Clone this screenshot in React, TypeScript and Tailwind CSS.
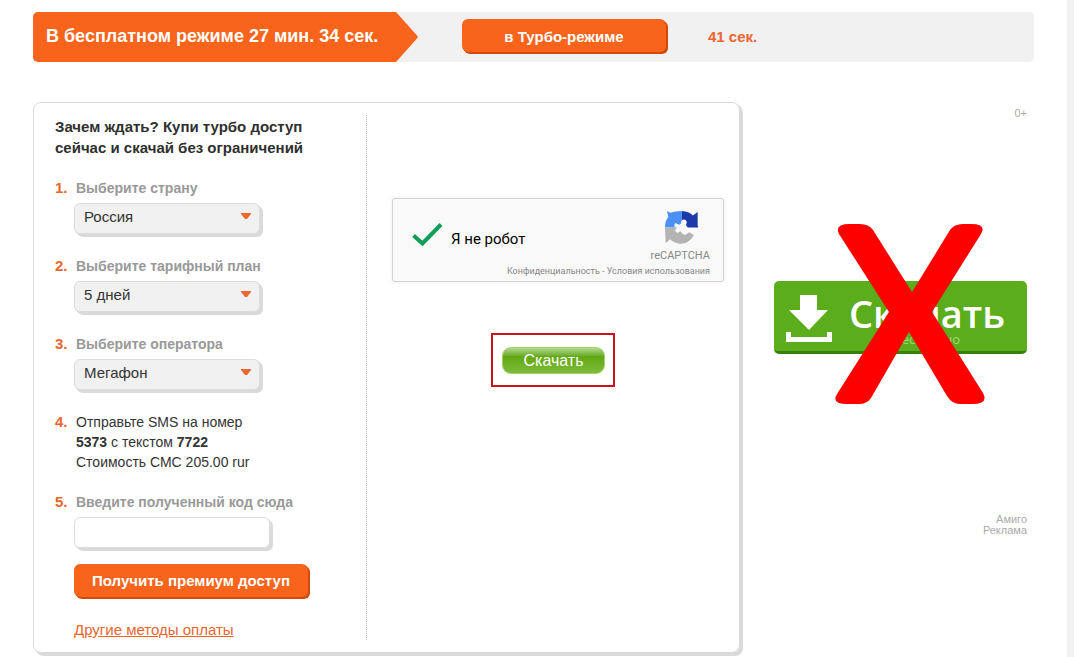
import React from "react";

interface SelectStep {
  id: string;
  label: string;
  value: string;
}

const selectSteps: SelectStep[] = [
  { id: "country", label: "Выберите страну", value: "Россия" },
  { id: "plan", label: "Выберите тарифный план", value: "5 дней" },
  { id: "operator", label: "Выберите оператора", value: "Мегафон" },
];

const StepNumber = ({ n }: { n: number }) => (
  <span className="w-[21px] shrink-0 font-bold text-[#e9662f]">{n}.</span>
);

const SpeedBar = () => (
  <header className="flex h-[50px] items-center rounded-[5px] bg-[#f1f1f1]">
    <div className="flex h-full w-[362px] items-center rounded-l-[5px] bg-[#f8641b] pb-0.5 pl-[13px] text-lg font-bold whitespace-nowrap text-white">
      В бесплатном режиме 27 мин. 34 сек.
    </div>
    <svg width="23" height="50" viewBox="0 0 23 50" className="shrink-0" aria-hidden="true">
      <path d="M0 0h1L22 23.500q1.500 1.500 0 3L1 50H0Z" fill="#f8641b" />
    </svg>
    <button
      type="button"
      className="mb-[3px] ml-11 h-[33px] w-[204px] rounded-md bg-[#f8641b] pt-1 text-[15px] font-bold text-white shadow-[1px_1px_0_#d14a0c,2px_2px_0_#d14a0c]"
    >
      в Турбо-режиме
    </button>
    <span className="ml-[42px] text-[15px] font-bold text-[#e9662f]">41 сек.</span>
  </header>
);

const PremiumForm = () => (
  <form className="w-[333px] shrink-0 border-r border-dotted border-[#bdbdbd] pl-[21px] text-[15px] leading-5 text-[#333]">
    <h2 className="pt-px text-[15px] leading-[21px] font-bold text-[#2f2f2f]">
      Зачем ждать? Купи турбо доступ
      <br />
      сейчас и скачай без ограничений
    </h2>
    <ol className="mt-5 flex flex-col gap-[19px]">
      {selectSteps.map((step, i) => (
        <li key={step.id} className="flex">
          <StepNumber n={i + 1} />
          <div>
            <label htmlFor={step.id} className="block text-sm leading-5 font-bold text-[#999]">
              {step.label}
            </label>
            <div className="relative mt-[5px] mb-[3px] -ml-0.5 w-[186px]">
              <select
                id={step.id}
                defaultValue={step.value}
                className="block h-[31px] w-full appearance-none rounded-md border border-[#dcdcdc] bg-[#f1f1f1] pb-[3px] pl-[9px] text-[15px] shadow-[1px_1px_0_#dadada,2px_2px_0_#dadada,3px_3px_0_#dadada]"
              >
                <option>{step.value}</option>
              </select>
              <svg
                width="10"
                height="6"
                viewBox="0 0 10 6"
                className="pointer-events-none absolute top-2.5 right-[9px]"
                aria-hidden="true"
              >
                <path d="M0 0h10v1L6 6H4L0 1Z" fill="#ee6730" />
              </svg>
            </div>
          </div>
        </li>
      ))}
      <li className="flex pb-px">
        <StepNumber n={4} />
        <p className="text-sm leading-5">
          Отправьте SMS на номер
          <br />
          <b>5373</b> с текстом <b>7722</b>
          <br />
          Стоимость СМС 205.00 rur
        </p>
      </li>
      <li className="flex">
        <StepNumber n={5} />
        <div>
          <label htmlFor="code" className="block text-sm leading-5 font-bold text-[#999]">
            Введите полученный код сюда
          </label>
          <input
            id="code"
            type="text"
            className="mt-[5px] mb-[3px] -ml-0.5 block h-[31px] w-[196px] rounded-md border border-[#dcdcdc] bg-white px-2 shadow-[1px_1px_0_#dadada,2px_2px_0_#dadada,3px_3px_0_#dadada]"
          />
        </div>
      </li>
    </ol>
    <div className="mt-[13px] flex flex-col items-start gap-[23px] pl-[19px]">
      <button
        type="submit"
        className="h-[33px] w-[234px] rounded-md bg-[#f8641b] text-[15px] font-bold whitespace-nowrap text-white shadow-[1px_1px_0_#d14a0c,2px_2px_0_#d14a0c]"
      >
        Получить премиум доступ
      </button>
      <a href="#" className="text-[#e9662f] underline">
        Другие методы оплаты
      </a>
    </div>
  </form>
);

const RecaptchaLogo = () => (
  <svg width="33" height="33" viewBox="0 0 98 98" aria-hidden="true">
    <path d="M6 0 16 5Q30 0 50 0V49H0Q0 29 10 18Z" fill="#4a90f5" />
    <path d="M50 0Q70 1 83 13L97 3V49H50Z" fill="#1c3aa9" />
    <path d="M0 49H55L86 71Q72 97 45 97 27 96 15 84L2 96Z" fill="#b3b3b3" />
    <path
      d="M50 27Q60 22 65 32L62 43 97 49 86 71 72 63 60 71Q50 68 46 60L36 65 29 57 36 50 27 45 30 36 42 41 47 38Z"
      fill="#f9f9f9"
    />
    <path d="M68 49H97V44L62 43Z" fill="#1c3aa9" />
  </svg>
);

const Recaptcha = () => (
  <div className="flex h-[84px] w-[332px] flex-col rounded-[3px] border border-[#d3d3d3] bg-[#f9f9f9] font-['Roboto',sans-serif] shadow-[0_0_4px_rgba(0,0,0,0.08)]">
    <div className="flex justify-between pt-3 pr-[13px] pl-[19px]">
      <label htmlFor="robot" className="flex h-14 items-center text-[15px] text-black">
        <span className="relative mr-2 h-[25px] w-[31px]">
          <input id="robot" type="checkbox" defaultChecked className="block size-full appearance-none" />
          <svg
            width="31"
            height="24"
            viewBox="0 0 31 24"
            className="pointer-events-none absolute -top-1 left-0"
            aria-hidden="true"
          >
            <path d="M1.500 12.500 10.500 20.500 29 1.500" fill="none" stroke="#0f9d58" strokeWidth="4" />
          </svg>
        </span>
        Я не робот
      </label>
      <div className="flex flex-col items-end">
        <span className="mr-3">
          <RecaptchaLogo />
        </span>
        <span className="mt-[5px] text-[11px] leading-[14px] text-[#888]">reCAPTCHA</span>
      </div>
    </div>
    <p className="-mt-0.5 pr-[13px] text-right text-[9px] leading-3 text-[#888]">
      <a href="#">Конфиденциальность</a> - <a href="#">Условия использования</a>
    </p>
  </div>
);

const AdBanner = () => (
  <aside className="mr-2 flex w-[253px] shrink-0 flex-col text-[11px] leading-[11px] text-[#aaa]">
    <span className="mt-1.5 text-right">0+</span>
    <div className="relative mt-[162px]">
      <a
        href="#"
        className="flex h-[73px] items-start rounded-[5px] border-b-[3px] border-[#35800f] bg-[#5bad1b] pt-3.5 pl-3 font-['Open_Sans',sans-serif] text-white"
      >
        <svg width="46" height="48" viewBox="0 0 46 48" aria-hidden="true">
          <path d="M14 0h17v15H42L23 35 3 15h11ZM0 37h5v5h36v-5h5v10H0Z" fill="#fff" />
        </svg>
        <span className="ml-[17px] flex flex-col items-center">
          <span className="text-[38px] leading-9 font-semibold">Скачать</span>
          <span className="text-[13px] leading-4 text-[#a8d77f]">бесплатно</span>
        </span>
      </a>
      <svg
        width="150"
        height="182"
        viewBox="0 0 150 182"
        className="pointer-events-none absolute -top-[58px] left-[61px]"
        aria-hidden="true"
      >
        <path
          d="M15 1H25Q34 1 38 7L77 69 115 7Q119 1 128 1H136Q152 1 146 11L97 89 148 170Q154 181 137 181H125Q117 181 112 173L74 109 36 175Q32 181 24 181H12Q-4 181 2 171L54 89 4 11Q-1 1 15 1Z"
          fill="#f00"
        />
      </svg>
    </div>
    <p className="mt-40 text-right">
      Амиго
      <br />
      Реклама
    </p>
  </aside>
);

const App = () => (
  <div className="flex min-h-screen bg-white font-['Liberation_Sans',Arial,sans-serif]">
    <div className="min-w-0 flex-1 px-[33px] pt-3">
      <SpeedBar />
      <div className="mt-10 flex gap-[34px]">
        <main className="mb-[3px] flex flex-1 rounded-lg border border-[#dadada] pt-3 pb-3 shadow-[1px_1px_0_#dadada,2px_2px_0_#dadada,3px_3px_0_#dadada]">
          <PremiumForm />
          <section className="flex flex-1 flex-col items-center pt-[83px] pr-[15px] pl-[25px]">
            <Recaptcha />
            <div className="mt-[51px] mr-[10px] border-2 border-[#c9151b] pt-3 pr-2 pb-[11px] pl-[9px]">
              <button
                type="button"
                className="block h-[27px] w-[103px] rounded-[9px] border border-[#a4d06c] bg-linear-to-b from-[#b4d98a] via-[#62a80c] via-35% to-[#7dbb3a] pt-px text-base leading-6 text-white"
              >
                Скачать
              </button>
            </div>
          </section>
        </main>
        <AdBanner />
      </div>
    </div>
    {/* page edge */}
    <div className="w-[7px] bg-[#f1f1f1]" />
  </div>
);

export default App;
